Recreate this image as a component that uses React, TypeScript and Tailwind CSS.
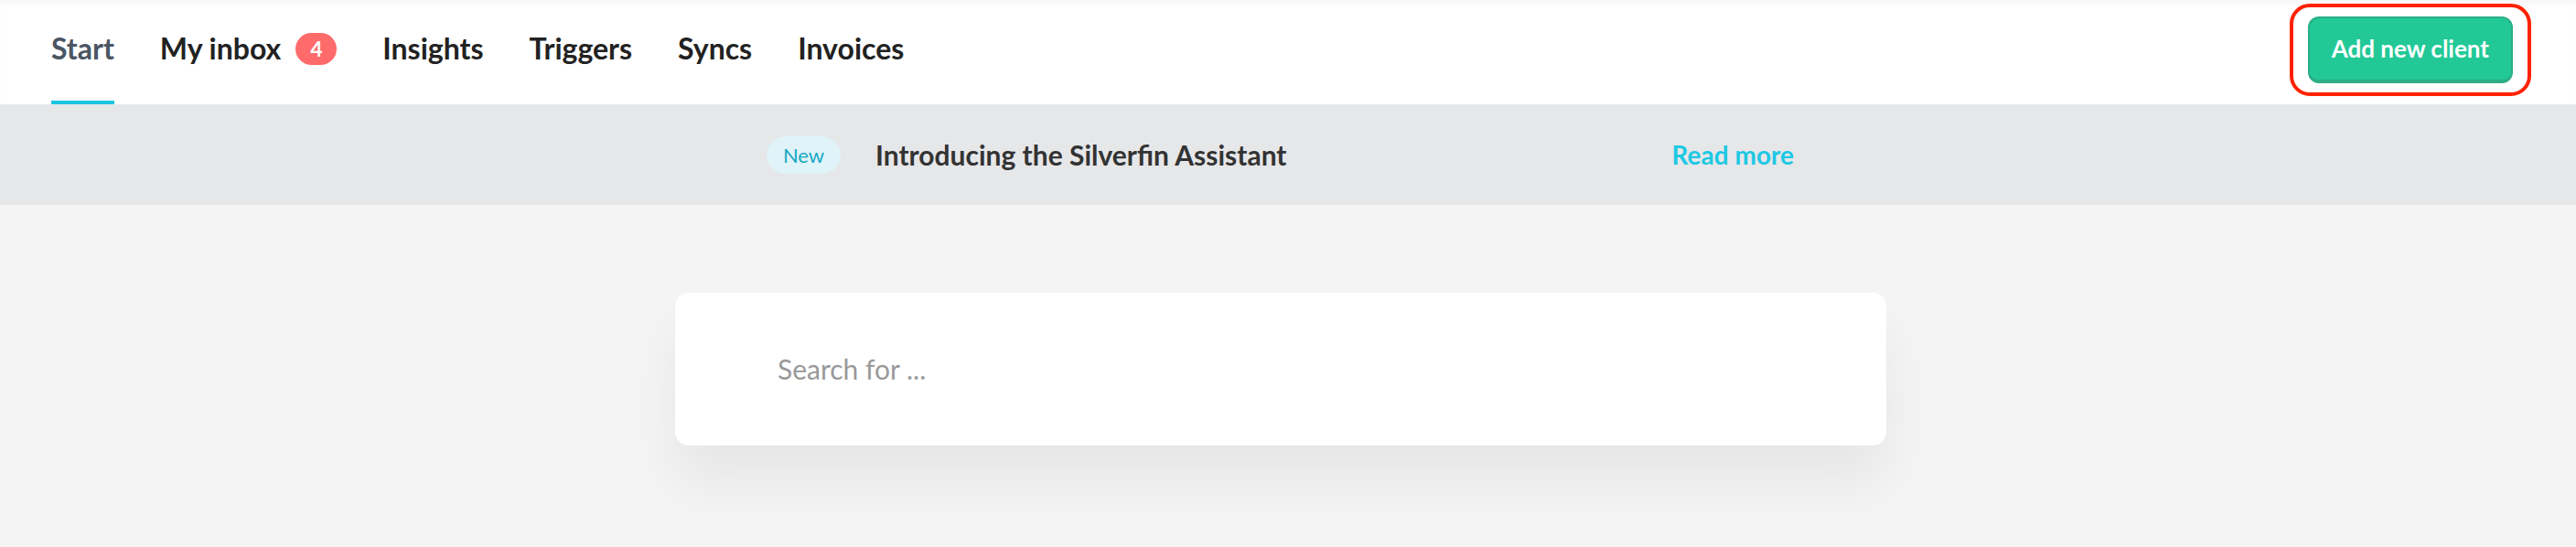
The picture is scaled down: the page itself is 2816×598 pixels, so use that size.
import { useState } from "react";

const tabs = [
  { label: "Start", active: true },
  { label: "My inbox", badge: 4 },
  { label: "Insights" },
  { label: "Triggers" },
  { label: "Syncs" },
  { label: "Invoices" },
];

export default function App() {
  const [query, setQuery] = useState("");

  return (
    <div className="min-h-[598px] w-full bg-[#f4f4f4] font-[Lato,sans-serif]">
      {/* top nav */}
      <header className="flex h-[114px] items-stretch bg-white pl-[56px] pr-[49px] shadow-[inset_0_8px_8px_-4px_rgba(0,0,0,0.04)]">
        <nav className="flex items-stretch gap-[50px]">
          {tabs.map((t) => (
            <a
              key={t.label}
              href="#"
              className={
                t.active
                  ? "flex items-center border-b-4 border-[#1ec5e0] pt-[3px] pb-[7px] text-[32px] font-bold text-[#4a5663]"
                  : "flex items-center border-b-4 border-transparent pt-[3px] pb-[7px] text-[32px] font-bold text-[#222]"
              }
            >
              {t.label}
              {t.badge !== undefined && (
                <span className="ml-[16px] flex h-[35px] w-[45px] items-center justify-center rounded-full bg-[#ff6b6b] text-[23px] font-bold text-white">
                  {t.badge}
                </span>
              )}
            </a>
          ))}
        </nav>
        <div className="ml-auto flex items-center pb-[5px]">
          <div className="rounded-[22px] border-4 border-[#ff2200] px-[16px] py-[10px]">
            <button className="h-[73px] rounded-[12px] border-2 border-b-4 border-[#2bae86] bg-[#22c997] px-[24px] text-[26px] font-bold text-white">
              Add new client
            </button>
          </div>
        </div>
      </header>

      {/* announcement */}
      <div className="flex h-[110px] items-center justify-center bg-[#e6e7e9]">
        <div className="mr-[17px] flex w-[1123px] items-center">
          <span className="flex h-[41px] w-[81px] items-center justify-center rounded-full bg-[#dff3f8] text-[22px] text-[#17a8c3]">
            New
          </span>
          <span className="ml-[38px] text-[30px] font-bold text-[#333]">Introducing the Silverfin Assistant</span>
          <a href="#" className="ml-auto text-[28px] font-bold text-[#1ec8e3]">
            Read more
          </a>
        </div>
      </div>

      {/* search */}
      <div className="flex justify-center pt-[96px] pb-[80px]">
        <div className="mr-[16px] flex h-[167px] w-[1324px] items-center rounded-[15px] bg-white pl-[112px] pr-[60px] shadow-[0_40px_60px_rgba(0,0,0,0.06)]">
          <input
            value={query}
            onChange={(e) => setQuery(e.target.value)}
            placeholder="Search for ..."
            className="w-full bg-transparent text-[30px] text-[#333] outline-none placeholder:text-[#999]"
          />
        </div>
      </div>
    </div>
  );
}
